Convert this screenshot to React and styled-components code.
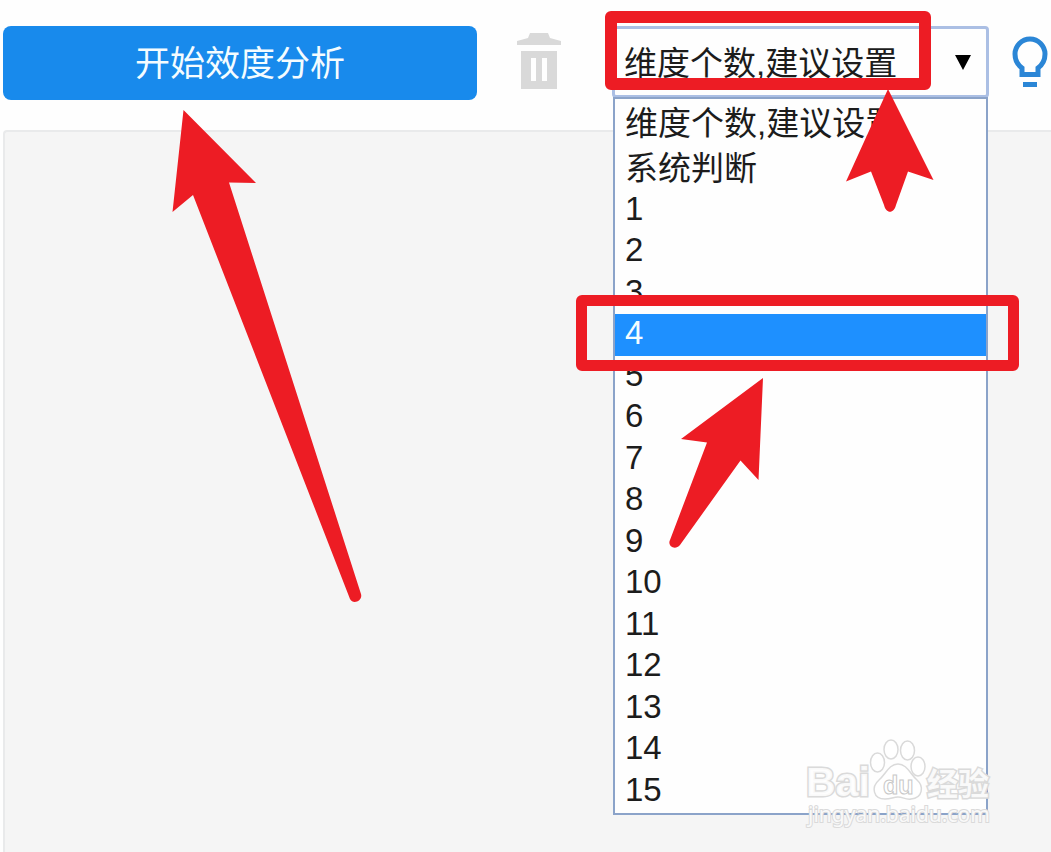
import React, { useState } from 'react'
import styled, { createGlobalStyle, ThemeProvider } from 'styled-components'

const theme = {
  colors: {
    primary: '#188aec',
    highlight: '#1e90ff',
    mark: '#ed1c24',
    border: '#8ba3c9',
    panel: '#f5f5f5',
    line: '#e9eaeb',
    muted: '#d9d9d9',
    text: '#1c1c1c',
  },
}

const GlobalStyle = createGlobalStyle`
  * {
    box-sizing: border-box;
  }

  html, body, #root {
    height: 100%;
  }

  body {
    margin: 0;
    background: #fefefe;
    font-family: "Liberation Sans", "Noto Sans CJK SC", sans-serif;
  }
`;

const Page = styled.div`
  display: flex;
  flex-direction: column;
  min-height: 100%;
`;

const Toolbar = styled.header`
  display: flex;
  align-items: flex-start;
  padding: 26px 3px 30px;
`;

const StartBox = styled.div`
  position: relative;
  flex: 1;
  margin-right: 40px;
`;

const StartButton = styled.button`
  width: 100%;
  height: 74px;
  padding: 0;
  border: 0;
  border-radius: 8px;
  background: ${(props) => props.theme.colors.primary};
  color: #f4fcff;
  font-family: inherit;
  font-size: 35px;
  line-height: 76px;
`;

const IconButton = styled.button`
  display: flex;
  align-items: center;
  height: 72px;
  padding: 0;
  border: 0;
  background: none;
  color: ${(props) => props.color};
`;

const SelectBox = styled.div`
  position: relative;
  width: 377px;
  margin: 0 23px 0 51px;
`;

const Select = styled.select`
  display: block;
  appearance: none;
  width: 100%;
  height: 72px;
  padding: 2px 44px 0 9px;
  border: 3px solid #abbfe4;
  border-radius: 4px;
  background: #fefefe;
  color: ${(props) => props.theme.colors.text};
  font-family: inherit;
  font-size: 33px;
  outline: none;
`;

const Caret = styled.svg`
  position: absolute;
  top: 29px;
  right: 18px;
  pointer-events: none;
`;

const Options = styled.ul`
  position: absolute;
  top: 71px;
  left: 1px;
  right: 1px;
  margin: 0;
  padding: 1px 0;
  list-style: none;
  border: 2px solid ${(props) => props.theme.colors.border};
  background: #fefefe;
`;

const Option = styled.li`
  height: ${(props) => (props.$wide ? '45px' : '41px')};
  padding-left: 10px;
  color: ${(props) => (props.$active ? '#f4fcff' : props.theme.colors.text)};
  background: ${(props) => (props.$active ? props.theme.colors.highlight : 'none')};
  font-size: 33px;
  line-height: ${(props) => (props.$wide ? '48px' : '37px')};
  white-space: nowrap;

  &:nth-child(even) {
    height: ${(props) => (props.$wide ? '45px' : '42px')};
  }
`;

const Frame = styled.div`
  position: absolute;
  top: ${(props) => props.$top}px;
  left: ${(props) => props.$left}px;
  width: ${(props) => props.$width}px;
  height: ${(props) => props.$height}px;
  border: ${(props) => props.$line}px solid ${(props) => props.theme.colors.mark};
  border-radius: 6px;
  pointer-events: none;
`;

const Arrow = styled.svg`
  position: absolute;
  top: ${(props) => props.$top}px;
  left: ${(props) => props.$left}px;
  fill: ${(props) => props.theme.colors.mark};
  pointer-events: none;
`;

const Watermark = styled.svg`
  position: absolute;
  top: 710px;
  left: 190px;
  pointer-events: none;
`;

const Panel = styled.main`
  flex: 1;
  margin-left: 3px;
  border-top: 2px solid ${(props) => props.theme.colors.line};
  border-left: 2px solid ${(props) => props.theme.colors.line};
  border-top-left-radius: 4px;
  background: ${(props) => props.theme.colors.panel};
`;

const TrashIcon = () => (
  <svg width="44" height="58" viewBox="0 0 44 58" fill="currentColor">
    <path d="M13 0H31L33 5L44 8V12H0V8L11 5Z" />
    <path fillRule="evenodd" d="M4 18H40V56H4ZM14 25V48H19V25ZM25 25V48H30V25Z" />
  </svg>
)

const BulbIcon = () => (
  <svg width="36" height="52" viewBox="0 0 36 52" fill="none" stroke="currentColor" strokeWidth="5">
    <path d="M10 38.5H26V32C30 29 33 24 33 18A15 15 0 0 0 3 18C3 24 6 29 10 32Z" />
    <path d="M11 48.5H25" />
  </svg>
)

const hint = '维度个数,建议设置'
const options = [hint, '系统判断', ...Array.from({ length: 15 }, (_, i) => String(i + 1))]

function BaiduMark() {
  return (
    <Watermark width="200" height="96" viewBox="0 0 200 96" fill="#fff" fillOpacity="0.85" stroke="#dadada">
      <g strokeWidth="3" paintOrder="stroke" fontWeight="700">
        <text x="4" y="60" fontFamily="Liberation Sans, sans-serif" fontSize="41">Bai</text>
        <text x="125" y="59" fontFamily="Noto Sans CJK SC, sans-serif" fontSize="31">经验</text>
      </g>
      <g strokeWidth="1.5">
        <ellipse cx="75.5" cy="26.5" rx="7" ry="9.5" />
        <ellipse cx="89" cy="13.5" rx="7" ry="9.5" />
        <ellipse cx="105.5" cy="14.5" rx="7" ry="9.5" />
        <ellipse cx="116" cy="30.5" rx="7" ry="9.5" />
        <path d="M96 28C87 28 84 38 77 44C69 51 71 63 83 63C89 63 91 61 96 61C101 61 104 64 109 63C121 62 122 50 115 44C108 38 105 28 96 28Z" />
        <text x="81" y="58" fontFamily="Liberation Sans, sans-serif" fontSize="25" fontWeight="700" stroke="#c8c8c8" strokeWidth="1">du</text>
      </g>
      <text x="6" y="86" fontFamily="Noto Sans, sans-serif" fontSize="21" strokeWidth="2" paintOrder="stroke">
        jingyan.baidu.com
      </text>
    </Watermark>
  )
}

function App() {
  const [value, setValue] = useState(hint)
  const [active, setActive] = useState('4')

  return (
    <ThemeProvider theme={theme}>
      <GlobalStyle />
      <Page>
        <Toolbar>
          <StartBox>
            <StartButton type="button">开始效度分析</StartButton>
            <Arrow $top={84} $left={169} width="190" height="494" viewBox="0 0 190 494">
              <path d="M11.5 0L84 73L57 72.5L189 484C191 491 181 495 178 489L21 85L0.5 102Z" />
            </Arrow>
          </StartBox>

          <IconButton type="button" aria-label="清空" color={theme.colors.muted}>
            <TrashIcon />
          </IconButton>

          <SelectBox>
            <Select aria-label="维度个数" value={value} onChange={(e) => setValue(e.target.value)}>
              {options.map((item) => (
                <option key={item} value={item}>{item}</option>
              ))}
            </Select>
            <Caret width="16" height="15" viewBox="0 0 16 15">
              <path d="M0 0H16L8 15Z" />
            </Caret>

            <Options role="listbox" aria-label="维度个数选项">
              {options.map((item, index) => (
                <Option
                  key={item}
                  role="option"
                  aria-selected={item === active}
                  $wide={index < 2}
                  $active={item === active}
                  onMouseEnter={() => setActive(item)}
                  onClick={() => setValue(item)}
                >
                  {item}
                </Option>
              ))}
            </Options>

            <BaiduMark />
            <Frame $top={-15} $left={-7} $width={326} $height={79} $line={12} />
            <Frame $top={269} $left={-36} $width={443} $height={76} $line={11} />
            <Arrow $top={63} $left={234} width="88" height="124" viewBox="0 0 88 124">
              <path d="M42 0L87.5 91L62 82.5L50 116C48 125 40 125 38 116L25 82.5L0 92.5Z" />
            </Arrow>
            <Arrow $top={352} $left={57} width="96" height="172" viewBox="0 0 96 172">
              <path d="M94 0L89.5 102L71.5 82.5L11 167C6 173 -2 168 1 162L38 64.5L12 61Z" />
            </Arrow>
          </SelectBox>

          <IconButton type="button" aria-label="提示" color="#2b86d6">
            <BulbIcon />
          </IconButton>
        </Toolbar>
        <Panel />
      </Page>
    </ThemeProvider>
  )
}

export default App
